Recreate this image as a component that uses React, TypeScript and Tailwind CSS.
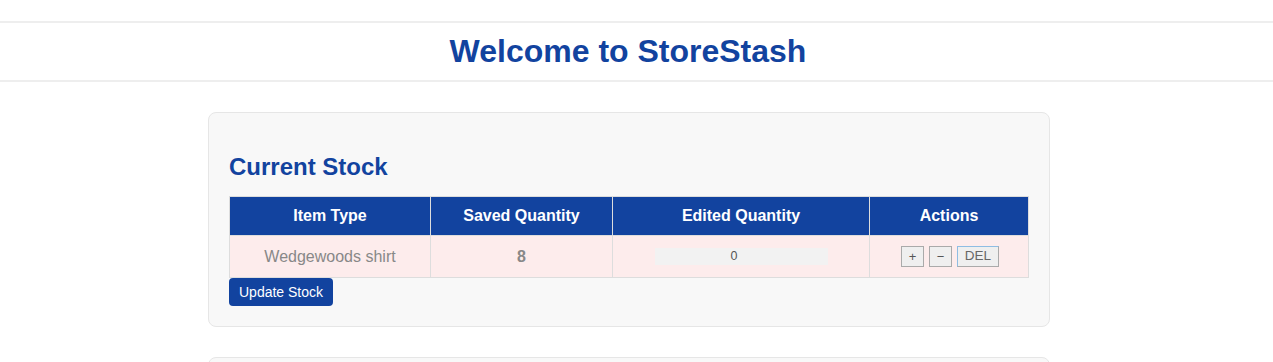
import React from "react";

export default function App() {
  return (
    <div className="h-[362px] overflow-hidden bg-white font-['Liberation_Sans',Arial,sans-serif]">
      <div className="pt-[21px]">
        <h1 className="border-y-2 border-[#eeeeee] py-[10px] pr-[17px] text-center text-[32px] font-bold leading-[37px] text-[#12439f]">
          Welcome to StoreStash
        </h1>
      </div>
      <div className="w-[1258px]">
        <div className="mx-auto mt-[30px] w-[842px] rounded-[8px] border border-[#e6e6e6] bg-[#f8f8f8] px-[20px] pt-[40px] pb-[20px]">
          <h2 className="text-[24px] font-bold leading-[28px] text-[#12439f]">Current Stock</h2>
          <table className="mt-[15px] w-[800px] border-collapse text-[16px]">
            <thead>
              <tr className="bg-[#12439f] text-white">
                <th className="h-[39px] w-[201px] border border-[#dddddd] font-bold">Item Type</th>
                <th className="w-[182px] border border-[#dddddd] font-bold">Saved Quantity</th>
                <th className="w-[257px] border border-[#dddddd] font-bold">Edited Quantity</th>
                <th className="border border-[#dddddd] font-bold">Actions</th>
              </tr>
            </thead>
            <tbody>
              <tr className="bg-[#fdecec] text-[#888888]">
                <td className="h-[42px] border border-[#dddddd] text-center">Wedgewoods shirt</td>
                <td className="border border-[#dddddd] text-center font-bold">8</td>
                <td className="border border-[#dddddd] text-center">
                  <div className="mx-auto flex h-[17px] w-[173px] items-center justify-center bg-[#f2f2f2] pr-[14px] text-[12.5px] text-[#555555]">
                    0
                  </div>
                </td>
                <td className="border border-[#dddddd]">
                  <div className="flex items-center justify-center gap-[5px] pl-[2px]">
                    <button className="flex h-[21px] w-[23px] items-center justify-center border border-[#aaaaaa] bg-[#efefef] text-[13px] text-[#555555]">
                      +
                    </button>
                    <button className="flex h-[21px] w-[23px] items-center justify-center border border-[#aaaaaa] bg-[#efefef] text-[13px] text-[#555555]">
                      −
                    </button>
                    <button className="flex h-[21px] w-[42px] items-center justify-center border border-[#aaaaaa] border-t-[#8fbde3] border-l-[#8fbde3] bg-[#efefef] text-[13.5px] text-[#666666]">
                      DEL
                    </button>
                  </div>
                </td>
              </tr>
            </tbody>
          </table>
          <button className="flex h-[28px] items-center rounded-[4px] bg-[#12439f] px-[10px] text-[14px] text-white">
            Update Stock
          </button>
        </div>
        <div className="mx-auto mt-[30px] h-[200px] w-[842px] rounded-[8px] border border-[#e6e6e6] bg-[#f8f8f8]"></div>
      </div>
    </div>
  );
}
